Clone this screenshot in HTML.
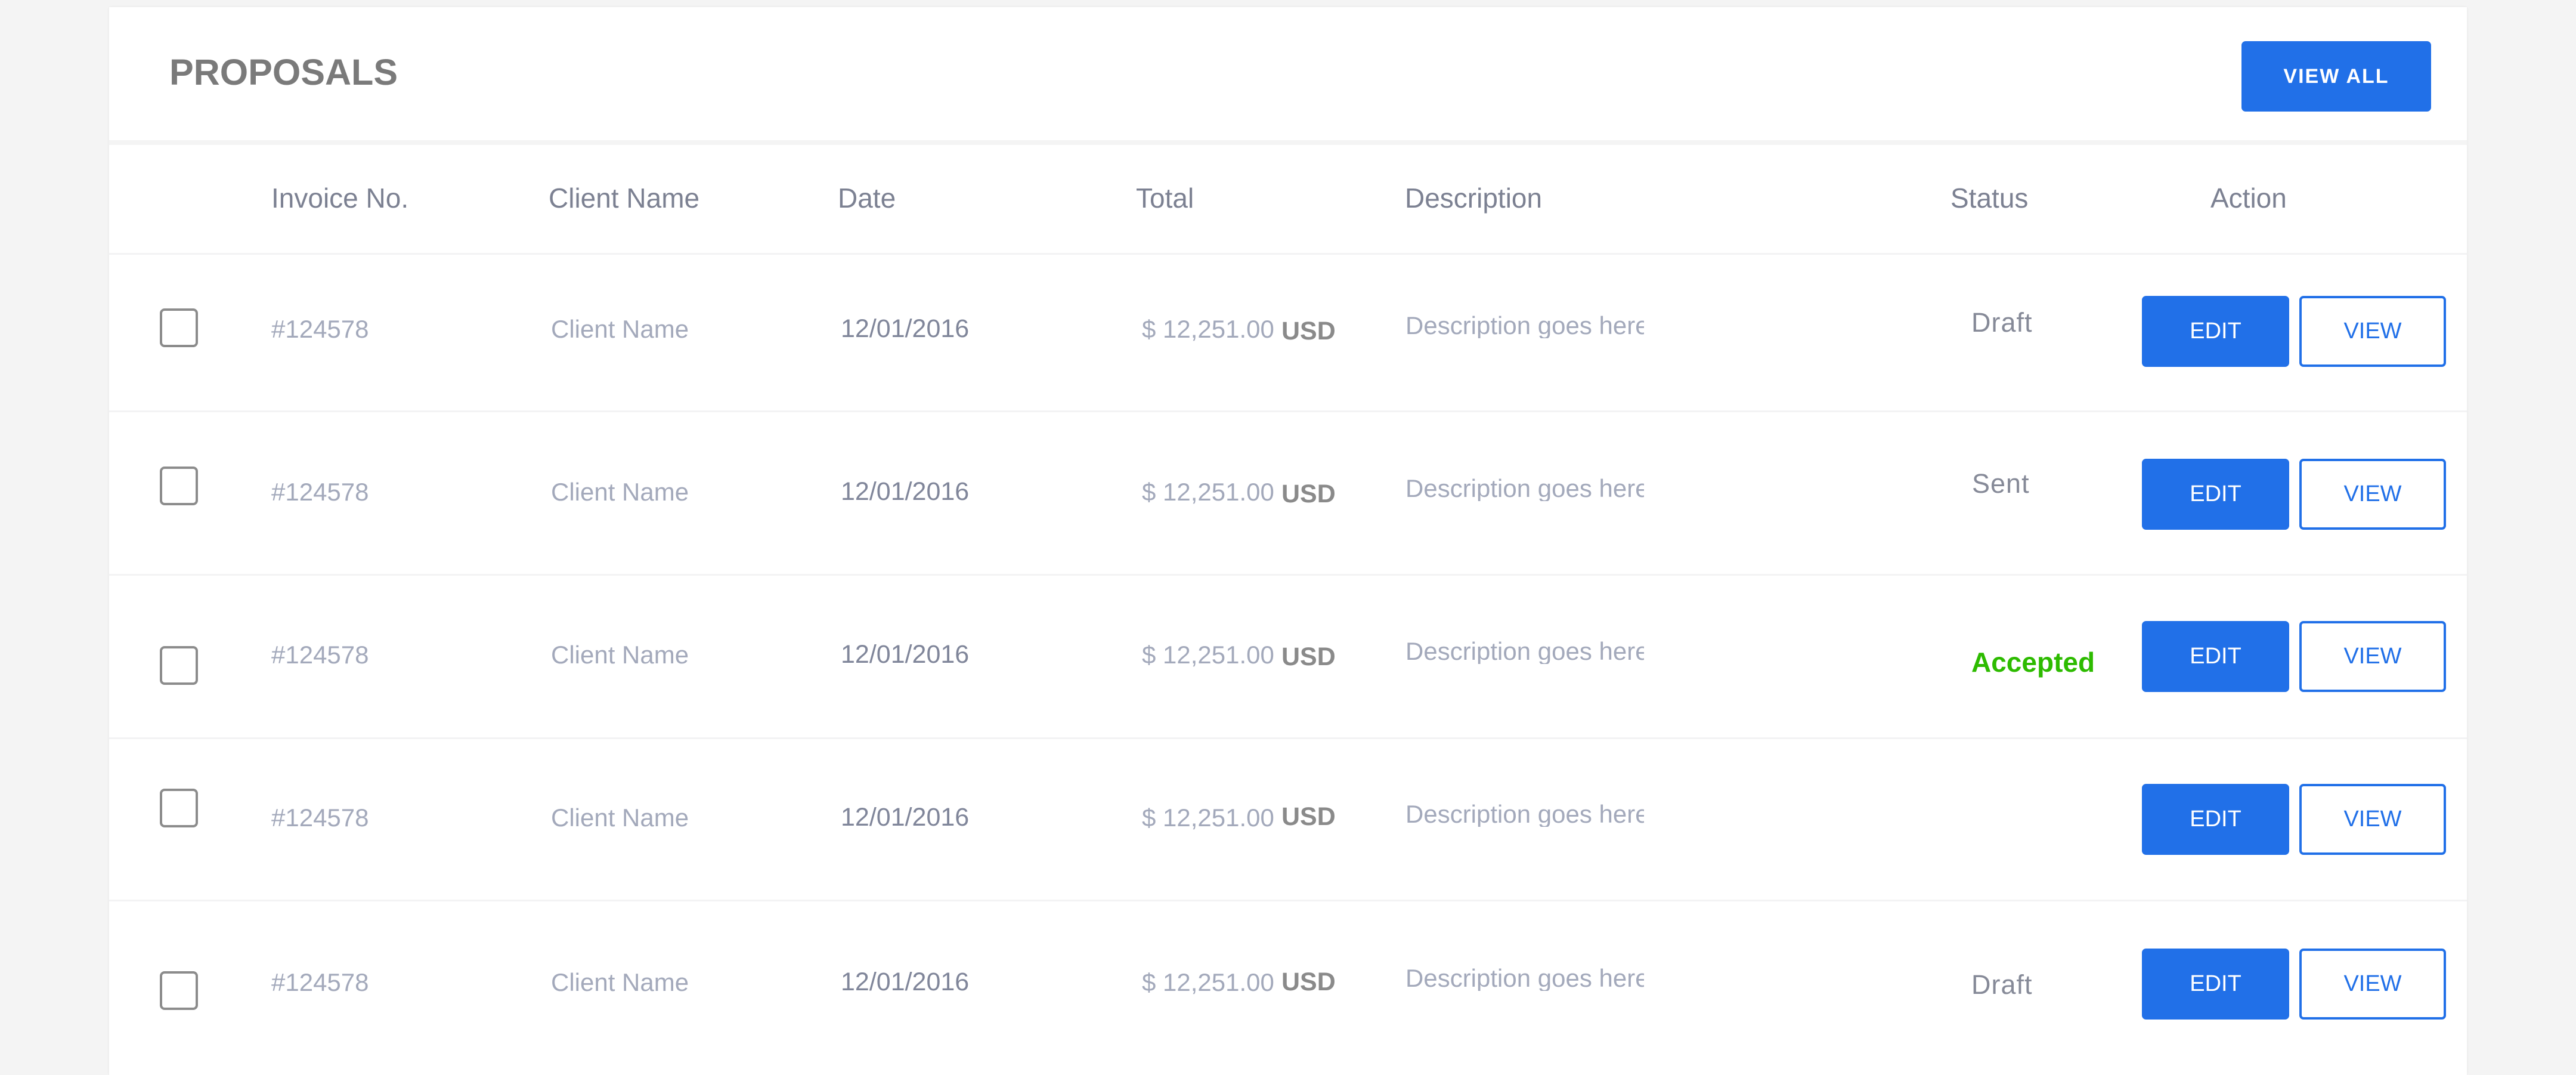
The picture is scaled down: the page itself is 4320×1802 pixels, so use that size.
<!DOCTYPE html>
<html><head><meta charset="utf-8"><style>
*{margin:0;padding:0;box-sizing:border-box}
body{width:4320px;height:1782px;background:#f4f4f4;position:relative;overflow:hidden;font-family:"Liberation Sans",sans-serif}
.card{position:absolute;left:183px;top:12px;width:3954px;height:1790px;background:#fff;box-shadow:0 0 4px rgba(0,0,0,.06)}
.gap{position:absolute;left:183px;top:235px;width:3954px;height:8px;background:#f4f4f4}
.t{position:absolute;white-space:nowrap;line-height:1}
.line{position:absolute;left:183px;width:3954px;height:3px;background:#f3f3f4}
.h{font-size:46px;color:#7c8192}
.c{font-size:42px;color:#a3a9bb}
.d{font-size:43px;color:#80869a}
.usd{font-size:43px;color:#8a8a8a;font-weight:bold}
.st{font-size:45px;color:#868a98;letter-spacing:1px}
.cb{position:absolute;left:268px;width:64px;height:65px;border:4px solid #8c8c8c;border-radius:8px}
.edit{position:absolute;left:3592px;width:247px;height:119px;background:#2170e8;border-radius:7px;color:#fff;font-size:38px;text-align:center;line-height:119px}
.view{position:absolute;left:3856px;width:246px;height:119px;border:4px solid #2170e8;border-radius:7px;color:#2170e8;font-size:38px;text-align:center;line-height:111px}
</style></head><body>
<div class="card"></div>
<div class="gap"></div>
<div class="t" style="left:284px;top:91px;font-size:61px;font-weight:bold;color:#7a7a7a;letter-spacing:0">PROPOSALS</div>
<div style="position:absolute;left:3759px;top:69px;width:318px;height:118px;background:#2170e8;border-radius:7px;color:#fff;font-weight:bold;font-size:34px;letter-spacing:2px;text-align:center;line-height:118px">VIEW ALL</div>

<div class="line" style="top:424px"></div>
<div class="t h" style="left:455px;top:309px">Invoice No.</div>
<div class="t h" style="left:920px;top:309px">Client Name</div>
<div class="t h" style="left:1405px;top:309px">Date</div>
<div class="t h" style="left:1905px;top:309px">Total</div>
<div class="t h" style="left:2356px;top:309px">Description</div>
<div class="t h" style="left:3271px;top:309px">Status</div>
<div class="t h" style="left:3707px;top:309px">Action</div>

<div class="line" style="top:688px"></div>
<div class="line" style="top:962px"></div>
<div class="line" style="top:1236px"></div>
<div class="line" style="top:1508px"></div>

<!-- row 1 -->
<div class="cb" style="top:517px"></div>
<div class="t c" style="left:455px;top:531px">#124578</div>
<div class="t c" style="left:924px;top:531px">Client Name</div>
<div class="t d" style="left:1410px;top:530px">12/01/2016</div>
<div class="t c" style="left:1915px;top:531px">$ 12,251.00</div>
<div class="t usd" style="left:2149px;top:534px">USD</div>
<div class="t c" style="left:2357px;top:525px;width:400px;overflow:hidden">Description goes here</div>
<div class="t st" style="left:3306px;top:518px">Draft</div>
<div class="edit" style="top:496px">EDIT</div><div class="view" style="top:496px">VIEW</div>

<!-- row 2 -->
<div class="cb" style="top:782px"></div>
<div class="t c" style="left:455px;top:804px">#124578</div>
<div class="t c" style="left:924px;top:804px">Client Name</div>
<div class="t d" style="left:1410px;top:803px">12/01/2016</div>
<div class="t c" style="left:1915px;top:804px">$ 12,251.00</div>
<div class="t usd" style="left:2149px;top:807px">USD</div>
<div class="t c" style="left:2357px;top:798px;width:400px;overflow:hidden">Description goes here</div>
<div class="t st" style="left:3307px;top:788px">Sent</div>
<div class="edit" style="top:769px">EDIT</div><div class="view" style="top:769px">VIEW</div>

<!-- row 3 -->
<div class="cb" style="top:1083px"></div>
<div class="t c" style="left:455px;top:1077px">#124578</div>
<div class="t c" style="left:924px;top:1077px">Client Name</div>
<div class="t d" style="left:1410px;top:1076px">12/01/2016</div>
<div class="t c" style="left:1915px;top:1077px">$ 12,251.00</div>
<div class="t usd" style="left:2149px;top:1080px">USD</div>
<div class="t c" style="left:2357px;top:1071px;width:400px;overflow:hidden">Description goes here</div>
<div class="t st" style="left:3306px;top:1087px;color:#2dbb00;font-weight:bold;font-size:46px;letter-spacing:0">Accepted</div>
<div class="edit" style="top:1041px">EDIT</div><div class="view" style="top:1041px">VIEW</div>

<!-- row 4 -->
<div class="cb" style="top:1322px"></div>
<div class="t c" style="left:455px;top:1350px">#124578</div>
<div class="t c" style="left:924px;top:1350px">Client Name</div>
<div class="t d" style="left:1410px;top:1349px">12/01/2016</div>
<div class="t c" style="left:1915px;top:1350px">$ 12,251.00</div>
<div class="t usd" style="left:2149px;top:1348px">USD</div>
<div class="t c" style="left:2357px;top:1344px;width:400px;overflow:hidden">Description goes here</div>
<div class="edit" style="top:1314px">EDIT</div><div class="view" style="top:1314px">VIEW</div>

<!-- row 5 -->
<div class="cb" style="top:1628px"></div>
<div class="t c" style="left:455px;top:1626px">#124578</div>
<div class="t c" style="left:924px;top:1626px">Client Name</div>
<div class="t d" style="left:1410px;top:1625px">12/01/2016</div>
<div class="t c" style="left:1915px;top:1626px">$ 12,251.00</div>
<div class="t usd" style="left:2149px;top:1625px">USD</div>
<div class="t c" style="left:2357px;top:1619px;width:400px;overflow:hidden">Description goes here</div>
<div class="t st" style="left:3306px;top:1628px">Draft</div>
<div class="edit" style="top:1590px">EDIT</div><div class="view" style="top:1590px">VIEW</div>
</body></html>
